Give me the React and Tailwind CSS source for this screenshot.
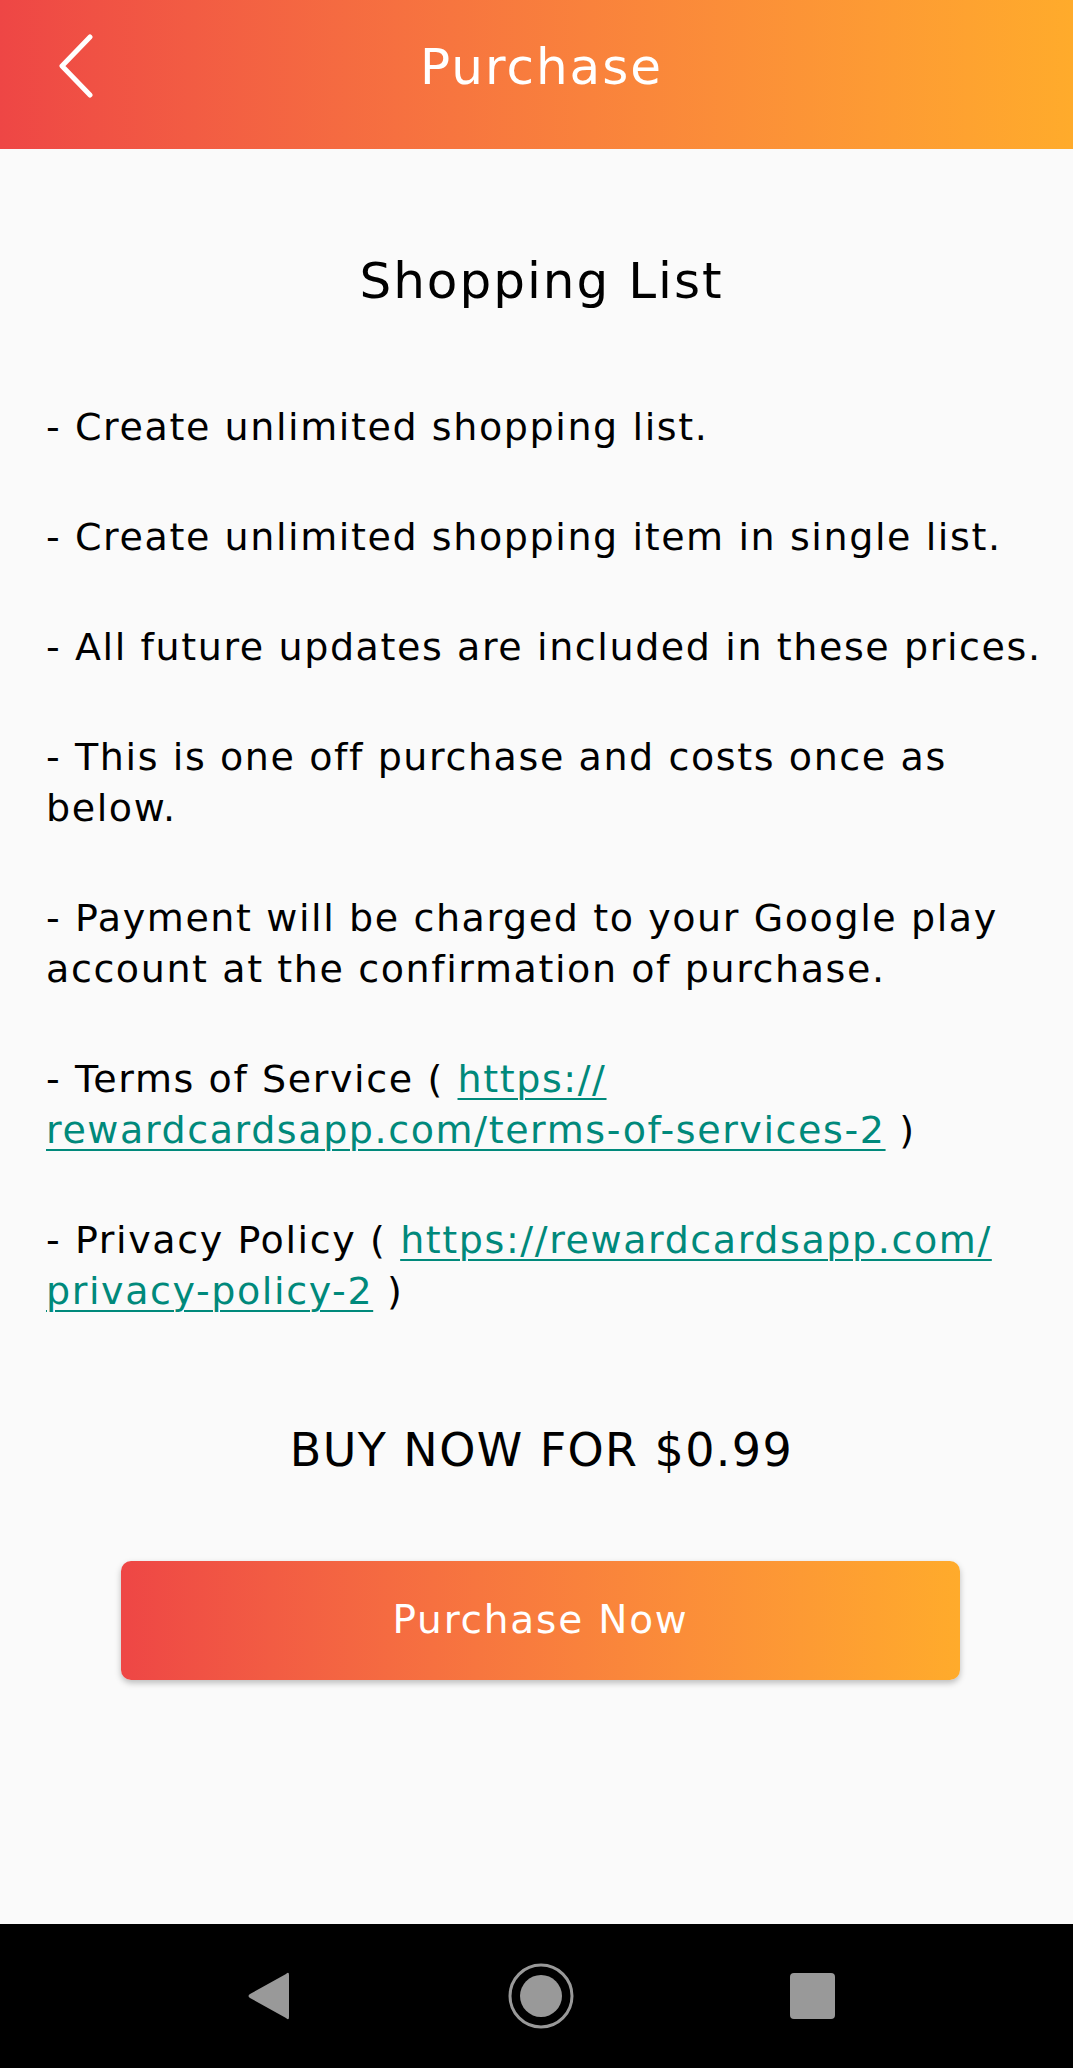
import React from "react";

const Link = ({ children }) => (
  <a className="text-[#00897b] underline decoration-[2px] underline-offset-[6px]" href="#">
    {children}
  </a>
);

const App = () => {
  return (
    <div className="w-[1073px] h-[2068px] flex flex-col bg-[#fafafa] text-black font-['DejaVu_Sans',sans-serif]">
      {/* header */}
      <div className="relative h-[149px] shrink-0 flex items-center justify-center pl-[10px] bg-gradient-to-r from-[#ee4645] to-[#ffab2b]">
        <button className="absolute left-[56px] top-[34px] w-[40px] h-[64px] flex items-center">
          <svg width="38" height="64" viewBox="0 0 38 64" fill="none">
            <path d="M34 3 L6 32 L34 61" stroke="white" strokeWidth="5" strokeLinecap="round" strokeLinejoin="round" />
          </svg>
        </button>
        <h1 className="text-white text-[50px] tracking-[2px] leading-none -mt-[16px]">Purchase</h1>
      </div>

      {/* content */}
      <div className="flex-1 flex flex-col pl-[46px] pr-[30px]">
        <h2 className="text-center text-[50px] tracking-[2px] leading-none mt-[107px] mb-[96px] pr-[6px]">
          Shopping List
        </h2>

        <div className="flex flex-col gap-[59px] text-[38px] tracking-[1.6px] leading-[51px]">
          <p>- Create unlimited shopping list.</p>
          <p>- Create unlimited shopping item in single list.</p>
          <p>- All future updates are included in these prices.</p>
          <p>- This is one off purchase and costs once as below.</p>
          <p>- Payment will be charged to your Google play account at the confirmation of purchase.</p>
          <p>
            - Terms of Service ({" "}
            <Link>
              https://<wbr />
              <span className="whitespace-nowrap">rewardcardsapp.com/terms-of-services-2</span>
            </Link>{" "}
            )
          </p>
          <p>
            - Privacy Policy ({" "}
            <Link>
              https://rewardcardsapp.com/<wbr />
              <span className="whitespace-nowrap">privacy-policy-2</span>
            </Link>{" "}
            )
          </p>
        </div>

        <p className="text-center text-[46px] tracking-[1.4px] leading-none mt-[110px] pr-[6px]">
          BUY NOW FOR $0.99
        </p>

        <div className="flex justify-center mt-[88px] pr-[8px]">
          <button className="w-[839px] h-[119px] rounded-[10px] bg-gradient-to-r from-[#ee4645] to-[#ffab2b] shadow-[0_3px_6px_rgba(0,0,0,0.25)] text-white text-[39px] tracking-[1.8px]">
            Purchase Now
          </button>
        </div>
      </div>

      {/* android nav bar */}
      <div className="h-[144px] shrink-0 bg-black flex items-center justify-center gap-[216px] pl-[8px]">
        <svg width="46" height="50" viewBox="0 0 46 50">
          <path d="M43 4 L43 46 Q43 50 40 47 L4 27 Q1 25 4 23 L40 3 Q43 0 43 4 Z" fill="#999" />
        </svg>
        <svg width="66" height="66" viewBox="0 0 66 66">
          <circle cx="33" cy="33" r="31" stroke="#999" strokeWidth="3" fill="none" />
          <circle cx="33" cy="33" r="21" fill="#999" />
        </svg>
        <div className="w-[45px] h-[46px] rounded-[4px] bg-[#999]" />
      </div>
    </div>
  );
};

export default App;
